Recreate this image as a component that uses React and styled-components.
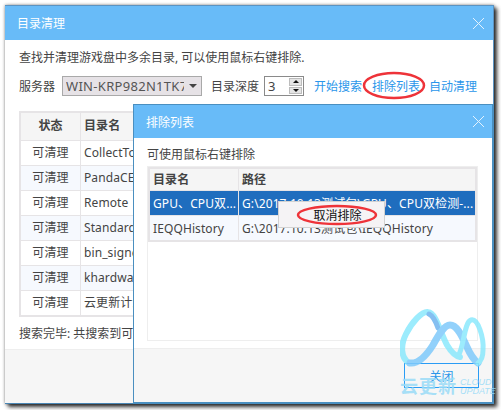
import styled, { createGlobalStyle } from "styled-components";

const GlobalStyle = createGlobalStyle`
html, body {
  margin: 0;
  padding: 0;
  background: #ffffff;
  width: 501px;
  height: 410px;
  overflow: hidden;
  font-family: "Noto Sans", "Noto Sans CJK SC", sans-serif;
  font-size: 12px;
  color: #444;
}
`;

const Page = styled.div`
position: relative;
width: 501px;
height: 410px;
padding: 5px 7px 6px 5px;
box-sizing: border-box;
overflow: hidden;
`;

const Dialog = styled.div`
display: flex;
flex-direction: column;
height: 100%;
box-sizing: border-box;
background: #fff;
box-shadow: 3px 3px 4px rgba(0, 0, 0, 0.8), 0 0 3px rgba(0, 0, 0, 0.45);
border-top: 1px solid #5b93c2;
border-right: 1px solid #5b93c2;
border-bottom: 1px solid #4a86b4;
`;

const Header = styled.div`
flex: none;
display: flex;
align-items: center;
justify-content: space-between;
height: 34px;
padding: 0 8px 0 12px;
background: #68bbf8;
color: #fff;
`;

const CloseIcon = () => (
  <svg width="13" height="13" viewBox="0 0 13 13" fill="none" stroke="#e3f2fe" strokeWidth="1">
    <path d="M1 1 L12 12 M12 1 L1 12" />
  </svg>
);

const Body = styled.div`
flex: 1;
padding: 7px 14px 0;
`;

const Line = styled.div`
height: 22px;
line-height: 22px;
white-space: nowrap;
`;

const ToolRow = styled.div`
display: flex;
align-items: center;
height: 20px;
margin-top: 7px;
white-space: nowrap;
`;

const Select = styled.div`
display: flex;
align-items: center;
justify-content: space-between;
box-sizing: border-box;
width: 140px;
height: 20px;
margin: 0 9px 0 7px;
padding: 0 4px 0 3px;
background: #e6e2e6;
border: 1px solid #a9a9a9;
font-size: 13px;
letter-spacing: 0.3px;
color: #555;
overflow: hidden;
`;

const SelectText = styled.span`
width: 118px;
overflow: hidden;
`;

const Caret = styled.span`
flex: none;
width: 0;
height: 0;
border-left: 4px solid transparent;
border-right: 4px solid transparent;
border-top: 4px solid #444;
`;

const Spinner = styled.div`
display: flex;
justify-content: space-between;
box-sizing: border-box;
width: 40px;
height: 20px;
margin: 0 10px 0 5px;
padding: 1px 1px 1px 3px;
border: 1px solid #8a8a8a;
font-size: 13px;
line-height: 16px;
`;

const SpinButtons = styled.div`
display: flex;
flex-direction: column;
gap: 1px;
width: 13px;
`;

const SpinButton = styled.div`
flex: 1;
display: flex;
align-items: center;
justify-content: center;
background: #e4e4e4;
border: 1px solid #bcbcbc;
&::after {
  content: "";
  border-left: 3px solid transparent;
  border-right: 3px solid transparent;
  ${(p) => (p.$up ? "border-bottom: 3px solid #111;" : "border-top: 3px solid #111;")}
}
`;

const LinkText = styled.a`
color: #2a96ea;
margin-right: ${(p) => p.$gap || 0}px;
`;

const Table = styled.div`
display: grid;
grid-template-columns: ${(p) => p.$cols};
width: ${(p) => p.$width}px;
background: #fff;
border: 2px solid #e6e4e6;
border-right-width: 1px;
border-bottom-width: 1px;
box-sizing: border-box;
`;

const Cell = styled.div`
box-sizing: border-box;
height: ${(p) => p.$height || 25}px;
line-height: ${(p) => (p.$height || 25) - 2}px;
padding: 0 3px;
border-right: 1px solid #e6e4e6;
border-bottom: 1px solid #e6e4e6;
text-align: ${(p) => (p.$center ? "center" : "left")};
font-weight: ${(p) => (p.$head ? 700 : 400)};
background: ${(p) => (p.$selected ? "#1f6dbe" : p.$head ? "#f5f5f5" : p.$alt ? "#f6f9fe" : "#fff")};
color: ${(p) => (p.$selected ? "#fff" : "#444")};
white-space: nowrap;
overflow: hidden;
letter-spacing: 0.1px;
`;

const ChildCell = styled(Cell)`
line-height: ${(p) => p.$height || 25}px;
`;

const OuterTable = styled(Table)`
margin-top: 15px;
`;

const Status = styled.div`
margin-top: 7px;
white-space: nowrap;
`;

const Footer = styled.div`
flex: none;
height: 54px;
background: #f6f6f6;
border-top: 1px solid #eee;
display: flex;
justify-content: flex-end;
align-items: flex-start;
padding: 14px 13px 0 0;
box-sizing: border-box;
`;

const ChildDialog = styled(Dialog)`
position: absolute;
left: 133px;
top: 104px;
width: 361px;
height: 300px;
box-shadow: none;
border: 1px solid #4a8fc0;
border-width: 1px 2px 2px 1px;
`;

const ChildHeader = styled(Header)`
height: 33px;
padding: 0 7px 0 12px;
`;

const ChildBody = styled.div`
flex: 1;
padding: 6px 14px 0 13px;
display: flex;
flex-direction: column;
`;

const Panel = styled.div`
flex: 1;
margin: 0 0 7px;
border: 1px solid #eee;
`;

const CloseButton = styled.button`
width: 75px;
height: 25px;
border: 1px solid #2a9cf5;
background: transparent;
color: #2a96ea;
font: inherit;
padding: 0;
`;

const ContextMenu = styled.div`
position: absolute;
left: 278px;
top: 201px;
width: 107px;
height: 27px;
box-sizing: border-box;
background: #f5f3f5;
border: 1px solid #d2d2d2;
color: #111;
text-align: center;
line-height: 27px;
padding-left: 12px;
`;

const Ring = styled.svg`
position: absolute;
left: ${(p) => p.$x}px;
top: ${(p) => p.$y}px;
pointer-events: none;
`;

const Watermark = styled.div`
position: absolute;
left: 400px;
top: 308px;
width: 90px;
height: 92px;
opacity: 0.85;
pointer-events: none;
`;

const BrandName = styled.span`
position: absolute;
left: 0;
top: 66px;
font-size: 18px;
line-height: 24px;
letter-spacing: 1px;
font-weight: 700;
color: #9adcf8;
white-space: nowrap;
`;

const BrandSub = styled.span`
position: absolute;
left: 60px;
top: ${(p) => p.$top}px;
font-family: "Liberation Sans", sans-serif;
font-size: 9px;
line-height: 9px;
font-style: italic;
color: #9adcf8;
`;

const rows = [
  ["CollectTo", false],
  ["PandaCE", true],
  ["Remote", false],
  ["Standard", true],
  ["bin_signe", false],
  ["khardwa", true],
  ["云更新计划", false],
];

export default function App() {
  return (
    <>
      <GlobalStyle />
      <Page>
        <Dialog>
          <Header>
            目录清理
            <CloseIcon />
          </Header>
          <Body>
            <Line>查找并清理游戏盘中多余目录, 可以使用鼠标右键排除.</Line>
            <ToolRow>
              服务器
              <Select>
                <SelectText>WIN-KRP982N1TK7I</SelectText>
                <Caret />
              </Select>
              目录深度
              <Spinner>
                3
                <SpinButtons>
                  <SpinButton $up />
                  <SpinButton />
                </SpinButtons>
              </Spinner>
              <LinkText $gap={10}>开始搜索</LinkText>
              <LinkText $gap={9}>排除列表</LinkText>
              <LinkText>自动清理</LinkText>
            </ToolRow>
            <OuterTable $cols="60px 1fr" $width={200}>
              <Cell $head $center $height={28}>状态</Cell>
              <Cell $head $height={28}>目录名</Cell>
              {rows.map(([name, alt]) => [
                <Cell key={name + "s"} $center $alt={alt}>可清理</Cell>,
                <Cell key={name} $alt={alt}>{name}</Cell>,
              ])}
            </OuterTable>
            <Status>搜索完毕: 共搜索到可清理目录</Status>
          </Body>
          <Footer />
        </Dialog>

        <ChildDialog>
          <ChildHeader>
            排除列表
            <CloseIcon />
          </ChildHeader>
          <ChildBody>
            <Line>可使用鼠标右键排除</Line>
            <Panel>
              <Table $cols="89px 1fr" $width={329}>
                <ChildCell $head $height={22}>目录名</ChildCell>
                <ChildCell $head $height={22}>路径</ChildCell>
                <ChildCell $selected>GPU、CPU双...</ChildCell>
                <ChildCell $selected>G:\2017.10.13测试包\GPU、CPU双检测-...</ChildCell>
                <ChildCell $alt>IEQQHistory</ChildCell>
                <ChildCell $alt>G:\2017.10.13测试包\IEQQHistory</ChildCell>
              </Table>
            </Panel>
          </ChildBody>
          <Footer>
            <CloseButton>关闭</CloseButton>
          </Footer>
        </ChildDialog>

        <ContextMenu>取消排除</ContextMenu>

        <Ring $x={362} $y={70} width="66" height="31" viewBox="0 0 66 31" fill="none">
          <ellipse cx="32" cy="15.5" rx="30" ry="12.5" stroke="#ee3339" strokeWidth="2.5" />
        </Ring>
        <Ring $x={295} $y={203} width="84" height="24" viewBox="0 0 84 24" fill="none">
          <ellipse cx="42" cy="12" rx="39" ry="9" stroke="#ee3339" strokeWidth="2.5" />
        </Ring>

        <Watermark>
          <svg width="90" height="66" viewBox="0 0 90 66" fill="none" strokeLinecap="round">
            <path d="M9 55 C1 50 0 38 6 26 C12 14 22 3 28 4 C36 5 40 24 47 37 C50 42 54 48 60 49" stroke="#8be9fd" strokeWidth="6" />
            <path d="M29 6 C33 8 36 14 38 20" stroke="#6fb4ef" strokeWidth="5" />
            <path d="M10 55 C20 56 28 45 33 37 C38 28 44 17 50 17 C58 17 63 31 67 39 C70 46 74 52 78 55" stroke="#7fcafb" strokeWidth="7" />
            <path d="M58 48 C64 40 64 14 71 12 C78 10 84 30 83 42 C83 48 81 53 78 55" stroke="#8be9fd" strokeWidth="5" />
          </svg>
          <BrandName>云更新</BrandName>
          <BrandSub $top={70}>CLOUD</BrandSub>
          <BrandSub $top={79}>UPDATE</BrandSub>
        </Watermark>
      </Page>
    </>
  );
}
